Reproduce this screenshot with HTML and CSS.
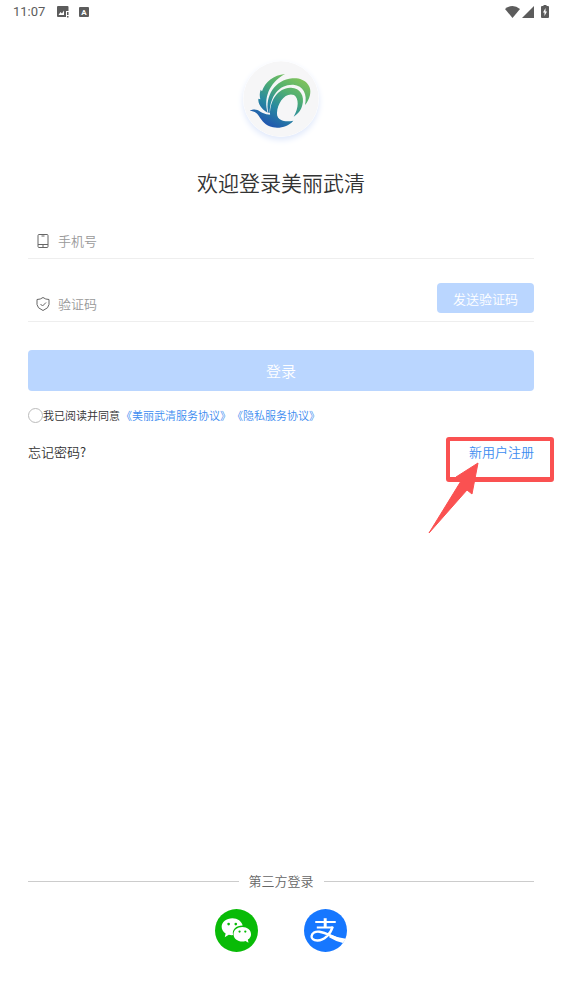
FILE: index.html
```html
<!DOCTYPE html>
<html lang="zh-CN">
<head>
    <meta charset="UTF-8">
    <meta name="viewport" content="width=device-width, initial-scale=1.0">
    <title>登录 - 美丽武清</title>
    <link rel="stylesheet" href="styles.css">
</head>
<body>
<header class="status-bar">
    <div class="status-left">
        <span class="clock">11:07</span>
        <svg class="status-icon" width="12" height="12" viewBox="0 0 12 12" aria-hidden="true">
            <path fill="#5c5c5c" d="M1 0h9.500q1 0 1 1v4H9v6H1q-1 0-1-1V1q0-1 1-1z"/>
            <path fill="#fff" d="M1.500 9 3.500 6 5 7.500 7 4.500V9z"/>
            <path fill="#5c5c5c" d="M10 6h1.500v3H10zM10 10h1.500v1.500H10z"/>
        </svg>
        <svg class="status-icon" width="10" height="12" viewBox="0 0 10 12" aria-hidden="true">
            <rect y="1" width="10" height="10" rx="1" fill="#5c5c5c"/>
            <text x="5" y="9" text-anchor="middle" fill="#fff" class="badge-letter">A</text>
        </svg>
    </div>
    <div class="status-right">
        <svg width="15" height="12" viewBox="0 0 15 12" aria-hidden="true">
            <path fill="#5c5c5c" d="M0 3Q7.500-3 15 3L7.500 12z"/>
        </svg>
        <svg width="12" height="12" viewBox="0 0 12 12" aria-hidden="true">
            <path fill="#5c5c5c" d="M12 0v12H0z"/>
        </svg>
        <svg class="battery" width="8" height="13" viewBox="0 0 8 13" aria-hidden="true">
            <path fill="#5c5c5c" d="M2.500 0h3v1H7q1 0 1 1v10q0 1-1 1H1q-1 0-1-1V2q0-1 1-1h1.500z"/>
            <path fill="#fff" d="M4.500 3 2 7.500h1.500V11L6 6.500H4.500z"/>
        </svg>
    </div>
</header>

<main class="login">
    <svg class="logo" viewBox="36 28 228 228" role="img" aria-label="美丽武清">
        <defs>
            <linearGradient id="feather" gradientUnits="userSpaceOnUse" x1="200" y1="70" x2="110" y2="225">
                <stop offset="0" stop-color="#83c45a"/>
                <stop offset="0.35" stop-color="#4fae72"/>
                <stop offset="0.65" stop-color="#2889a0"/>
                <stop offset="1" stop-color="#2053b0"/>
            </linearGradient>
        </defs>
        <circle cx="150" cy="142" r="113" fill="#f6f6f7"/>
        <g fill="url(#feather)">
            <path d="M162 67C128 70 102 91 93 119L89 114C85 125 86 134 88 143L82 141C81 157 91 171 110 183C98 141 112 95 162 67z"/>
            <path d="M112 183C101 134 132 84 184 80C222 77 244 103 237 130C234 143 229 152 222 160C230 128 217 101 187 99C146 97 117 131 116 184z"/>
            <path d="M117 188C117 143 142 110 177 108C207 106 222 133 214 160C210 176 202 186 188 195C204 168 204 140 189 130C164 120 139 153 138 183C138 198 143 206 152 210L120 202z"/>
            <path d="M56 178C68 171 78 173 88 180C103 190 121 188 138 192C143 205 161 213 187 207C173 224 148 231 126 227C102 222 93 207 84 194C78 184 70 178 56 178z"/>
        </g>
    </svg>
    <h1 class="title">欢迎登录美丽武清</h1>

    <form class="login-form">
        <div class="field">
            <label class="field-icon" for="phone" aria-label="手机号">
                <svg width="14" height="16" viewBox="0 0 14 16" fill="none" stroke="#666" aria-hidden="true">
                    <rect x="2" y="1.500" width="10" height="13" rx="1"/>
                    <path d="M2 11.500h10M5.500 3h3M6 13h2"/>
                </svg>
            </label>
            <input type="tel" id="phone" placeholder="手机号">
        </div>
        <div class="field field-code">
            <label class="field-icon" for="code" aria-label="验证码">
                <svg width="14" height="16" viewBox="0 0 14 16" fill="none" stroke="#666" stroke-linejoin="round" aria-hidden="true">
                    <path d="M7 1.500Q9.500 3.500 13 3.500V8.500Q13 12 7 14.500Q1 12 1 8.500V3.500Q4.500 3.500 7 1.500z"/>
                    <path d="M4.500 8 6.500 10 10 6.500"/>
                </svg>
            </label>
            <input type="text" id="code" placeholder="验证码">
            <button type="button" class="send-code">发送验证码</button>
        </div>
        <button type="submit" class="submit">登录</button>
        <div class="agreement">
            <input type="radio" id="agree">
            <label for="agree">我已阅读并同意</label>
            <a href="#">《美丽武清服务协议》</a>
            <a href="#">《隐私服务协议》</a>
        </div>
    </form>

    <div class="links">
        <a class="forgot" href="#">忘记密码?</a>
        <div class="register-wrap">
            <a class="register" href="#">新用户注册</a>
            <span class="highlight"></span>
            <svg class="arrow" width="52" height="74" viewBox="0 0 52 74" aria-hidden="true">
                <path fill="#fa5151" stroke="#fa5151" stroke-linejoin="round" d="M50 2 28 16 33 20 1 72 39 29 44 33z"/>
            </svg>
        </div>
    </div>
</main>

<footer class="third-party">
    <div class="divider">第三方登录</div>
    <div class="providers">
        <button type="button" class="provider" aria-label="微信登录">
            <svg viewBox="0 0 42 42" aria-hidden="true">
                <circle cx="21" cy="21" r="21" fill="#09bb07"/>
                <path fill="#fff" d="M17 9C11 9 6.500 12.600 6.500 17.300C6.500 20 8 22.400 10.400 24L9.500 27.500L13.500 25.200Q15.600 25.800 17.700 25.500C16.300 20.200 20.500 16.200 27 16.200C26.200 12.100 22 9 17 9z"/>
                <path fill="#fff" d="M26.700 17.500C21.900 17.500 18.100 20.500 18.100 24.600C18.100 28.700 21.900 31.700 26.700 31.700Q28.300 31.700 29.700 31.200L32.700 33L32.100 29.900C34 28.700 35.200 26.800 35.200 24.600C35.200 20.500 31.500 17.500 26.700 17.500z"/>
                <g fill="#09bb07">
                    <circle cx="13.300" cy="14.700" r="1.300"/>
                    <circle cx="20.300" cy="14.700" r="1.300"/>
                    <circle cx="24" cy="22" r="1.100"/>
                    <circle cx="29.600" cy="22" r="1.100"/>
                </g>
            </svg>
        </button>
        <button type="button" class="provider" aria-label="支付宝登录">
            <svg viewBox="0 0 42 42" aria-hidden="true">
                <circle cx="21" cy="21" r="21" fill="#1677ff"/>
                <g fill="none" stroke="#fff">
                    <path stroke-width="1.900" d="M11 12.700H31M12.500 18H28.500"/>
                    <path stroke-width="2.900" d="M20.700 9V18"/>
                    <path stroke-width="2.300" d="M28 17.200C26 24.500 19.500 31 13 30.800C9 30.800 7.200 28.800 7.400 26.500C7.700 23.500 11 21.700 15 22.200C21.500 23 28 27.500 38 31"/>
                </g>
                <path fill="#fff" d="M26 25.200Q33 28.500 41 29L38 33.300Q31 31.500 24.500 27.500z"/>
            </svg>
        </button>
    </div>
</footer>
</body>
</html>
```

FILE: styles.css
```css
* {
    box-sizing: border-box;
}

body {
    margin: 0;
    min-height: 100vh;
    display: flex;
    flex-direction: column;
    background: #fff;
    color: #333;
    font-family: "Noto Sans CJK SC", sans-serif;
    font-size: 13px;
    font-weight: 350;
    line-height: 20px;
}

a {
    text-decoration: none;
}

button,
input {
    font-family: inherit;
    font-weight: inherit;
    border: none;
}

svg {
    display: block;
}

/* Status bar */
.status-bar {
    display: flex;
    justify-content: space-between;
    align-items: center;
    height: 23px;
    padding: 0 13px;
}

.status-left {
    display: flex;
    align-items: center;
}

.clock {
    color: #5c5c5c;
    font-family: Roboto, sans-serif;
    font-size: 13px;
    font-weight: 400;
}

.status-icon {
    margin-left: 10px;
}

.clock + .status-icon {
    margin-left: 12px;
}

.badge-letter {
    font-family: Roboto, sans-serif;
    font-size: 8px;
    font-weight: 700;
}

.status-right {
    display: flex;
    align-items: center;
    gap: 2px;
}

.battery {
    margin-left: 5px;
}

/* Login */
.login {
    flex: 1;
    display: flex;
    flex-direction: column;
    padding: 38px 28px 0;
}

.logo {
    width: 76px;
    height: 76px;
    align-self: center;
    border-radius: 50%;
    box-shadow: 0 3px 6px #dfe8fb;
}

.title {
    margin: 30px 0 0;
    font-size: 21px;
    font-weight: 350;
    line-height: 30px;
    text-align: center;
}

.login-form {
    display: flex;
    flex-direction: column;
    margin-top: 26px;
}

.field {
    display: flex;
    align-items: center;
    height: 36px;
    padding-left: 8px;
    border-bottom: 1px solid #eee;
}

.field-icon {
    margin-right: 8px;
}

.field input {
    flex: 1;
    min-width: 0;
    padding: 0;
    background: none;
    font-size: 13px;
    line-height: 20px;
    outline: none;
}

.field input::placeholder {
    color: #999;
}

.field-code {
    margin-top: 27px;
}

.send-code {
    align-self: flex-end;
    height: 30px;
    margin-bottom: 8px;
    padding: 0 16px;
    border-radius: 4px;
    background: #bad6ff;
    color: #fff;
    font-size: 13px;
}

.submit {
    height: 41px;
    margin-top: 28px;
    border-radius: 4px;
    background: #bad6ff;
    color: #fff;
    font-size: 15px;
}

.agreement {
    display: flex;
    align-items: center;
    margin-top: 14px;
    font-size: 11px;
}

.agreement input {
    appearance: none;
    width: 15px;
    height: 15px;
    margin: 0;
    border: 1px solid #bbb;
    border-radius: 50%;
}

.agreement input:checked {
    background: #3c8cf0;
}

.agreement a,
.register {
    color: #3c8cf0;
}

.agreement a {
    margin-left: 1px;
}

.links {
    display: flex;
    justify-content: space-between;
    margin-top: 17px;
}

.forgot {
    color: #333;
}

/* Frame and arrow over the register link */
.register-wrap {
    position: relative;
}

.highlight {
    position: absolute;
    top: -5px;
    left: -23px;
    right: -20px;
    height: 45px;
    border: 4px solid #fa5151;
    border-bottom-width: 5px;
    border-radius: 3px;
    pointer-events: none;
}

.arrow {
    position: absolute;
    top: 19px;
    left: -41px;
    pointer-events: none;
}

/* Third-party login */
.third-party {
    padding: 0 28px 47px;
}

.divider {
    display: flex;
    align-items: center;
    gap: 10px;
    color: #666;
}

.divider::before,
.divider::after {
    content: "";
    flex: 1;
    height: 1px;
    background: #ccc;
}

.providers {
    display: flex;
    justify-content: center;
    gap: 46px;
    margin-top: 18px;
}

.provider {
    width: 43px;
    height: 43px;
    padding: 0;
    border-radius: 50%;
    background: none;
}
```
